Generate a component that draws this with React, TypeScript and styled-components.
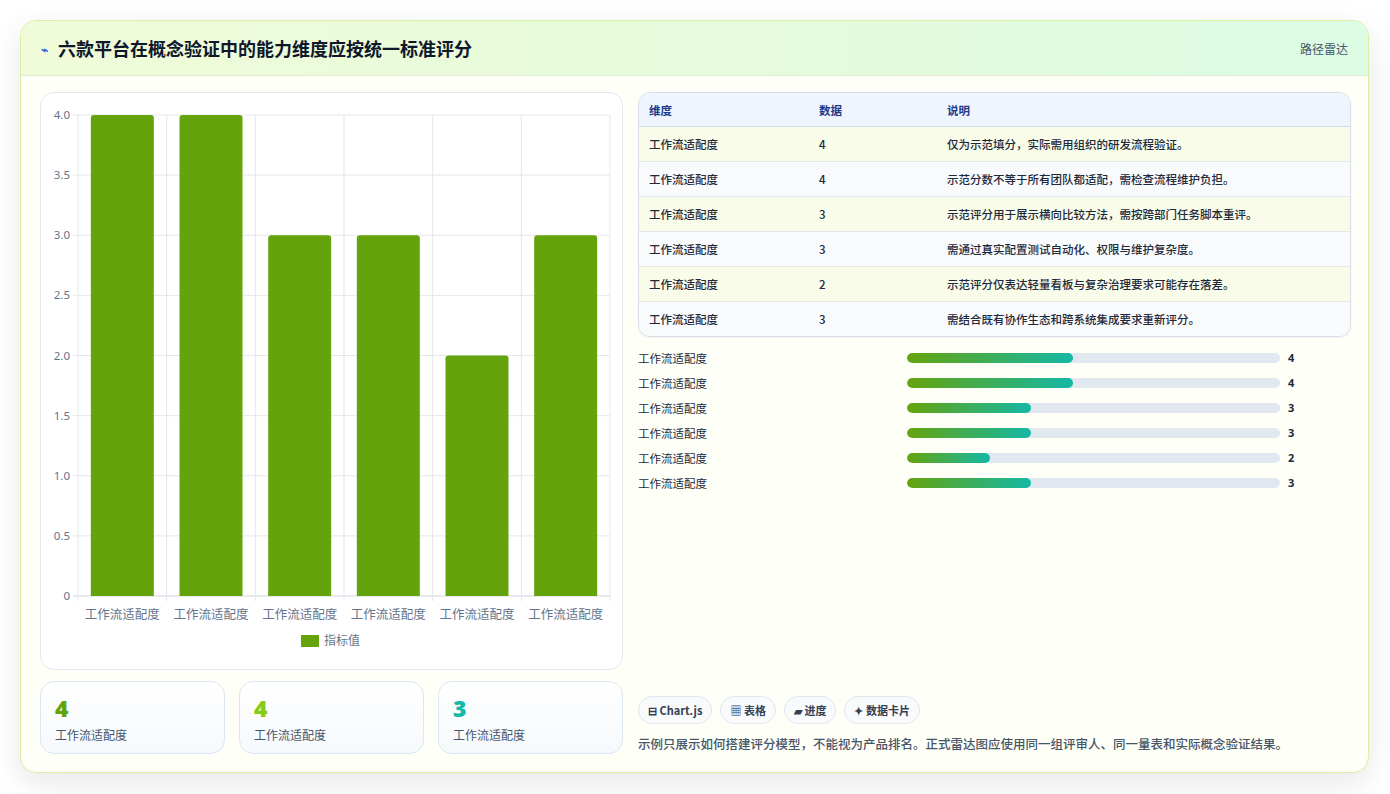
import React from "react";
import styled, { createGlobalStyle } from "styled-components";

const Global = createGlobalStyle`
  html, body { margin: 0; padding: 0; background: #ffffff; }
  body { font-family: "Noto Sans CJK SC", "Noto Sans", sans-serif; color: #1e293b; }
`;

const Page = styled.div`
  padding: 20px 21px 21px 20px;
  box-sizing: border-box;
  width: 1390px;
  height: 794px;
`;

const Card = styled.div`
  height: 753px;
  box-sizing: border-box;
  border: 1px solid #d9f0a3;
  border-radius: 16px;
  background: #fefff7;
  box-shadow: 0 10px 30px rgba(15, 23, 42, 0.1);
  overflow: hidden;
  display: flex;
  flex-direction: column;
`;

const Header = styled.div`
  height: 55px;
  flex: none;
  box-sizing: border-box;
  padding: 0 20px 0 20px;
  display: flex;
  align-items: center;
  justify-content: space-between;
  background: linear-gradient(90deg, #f0fbd9 0%, #e4fbdc 60%, #dcfce4 100%);
  border-bottom: 1px solid #e2ead4;
`;

const Title = styled.h1`
  margin: 0;
  font-size: 18px;
  font-weight: 700;
  color: #0f172a;
  display: flex;
  align-items: center;
  gap: 10px;
`;

const Bolt = styled.span`
  color: #2563eb;
  font-size: 12px;
`;

const HeaderTag = styled.span`
  font-size: 12px;
  color: #475569;
`;

const Body = styled.div`
  flex: 1;
  display: grid;
  grid-template-columns: 583px 713px;
  gap: 15px;
  padding: 16px 18px 18px 19px;
  min-height: 0;
`;

const LeftCol = styled.div`
  display: flex;
  flex-direction: column;
  gap: 11px;
`;

const ChartCard = styled.div`
  height: 578px;
  box-sizing: border-box;
  border: 1px solid #e2e8f0;
  border-radius: 14px;
  background: #ffffff;
`;

const KpiRow = styled.div`
  display: grid;
  grid-template-columns: repeat(3, 1fr);
  gap: 14px;
`;

const Kpi = styled.div`
  height: 73px;
  box-sizing: border-box;
  border: 1px solid #dbe7f3;
  border-radius: 14px;
  background: linear-gradient(180deg, #ffffff, #f6f9fd);
  padding: 12px 14px;
`;

const KpiValue = styled.div<{ $c: string }>`
  font-family: "Open Sans", "Noto Sans", sans-serif;
  font-size: 23px;
  font-weight: 800;
  line-height: 28px;
  color: ${(p) => p.$c};
`;

const KpiLabel = styled.div`
  font-size: 12px;
  color: #475569;
  margin-top: 4px;
`;

const RightCol = styled.div`
  display: flex;
  flex-direction: column;
`;

const TableWrap = styled.div`
  border: 1px solid #d7dee8;
  border-radius: 12px;
  overflow: hidden;
  box-shadow: 0 1px 2px rgba(15, 23, 42, 0.06);
`;

const Table = styled.table`
  width: 100%;
  border-collapse: collapse;
  font-size: 11.5px;
`;

const Th = styled.th`
  text-align: left;
  font-weight: 700;
  color: #1e3a8a;
  background: #eef5fe;
  height: 33px;
  padding: 0 10px;
  border-bottom: 1px solid #cfdbe8;
`;

const Tr = styled.tr<{ $alt: boolean }>`
  background: ${(p) => (p.$alt ? "#f8fafc" : "#f8fce9")};
`;

const Td = styled.td`
  height: 34px;
  padding: 0 10px;
  color: #1e293b;
  font-weight: 500;
  border-top: 1px solid #e2e8f0;
`;

const BarList = styled.div`
  margin-top: 8px;
  display: flex;
  flex-direction: column;
`;

const BarRow = styled.div`
  height: 25px;
  display: grid;
  grid-template-columns: 269px 373px 1fr;
  align-items: center;
  font-size: 11.5px;
`;

const Track = styled.div`
  height: 10px;
  border-radius: 5px;
  background: #e2e8f0;
  overflow: hidden;
`;

const Fill = styled.div`
  height: 100%;
  border-radius: 5px;
  background: linear-gradient(90deg, #65a30d, #14b8a6);
`;

const BarValue = styled.span`
  padding-left: 8px;
  font-weight: 700;
  font-family: "Open Sans", sans-serif;
  font-size: 11px;
`;

const Spacer = styled.div`
  flex: 1;
`;

const Chips = styled.div`
  display: flex;
  gap: 8px;
`;

const Chip = styled.span`
  height: 28px;
  box-sizing: border-box;
  padding: 0 9px;
  border: 1px solid #e2e8f0;
  border-radius: 14px;
  background: #f8fafc;
  display: inline-flex;
  align-items: center;
  gap: 3px;
  font-size: 11px;
  font-weight: 700;
  color: #334155;
`;

const Note = styled.p`
  margin: 10px 0 1px;
  font-size: 12.5px;
  color: #475569;
  font-weight: 500;
`;

const rows = [
  { v: 4, d: "仅为示范填分，实际需用组织的研发流程验证。" },
  { v: 4, d: "示范分数不等于所有团队都适配，需检查流程维护负担。" },
  { v: 3, d: "示范评分用于展示横向比较方法，需按跨部门任务脚本重评。" },
  { v: 3, d: "需通过真实配置测试自动化、权限与维护复杂度。" },
  { v: 2, d: "示范评分仅表达轻量看板与复杂治理要求可能存在落差。" },
  { v: 3, d: "需结合既有协作生态和跨系统集成要求重新评分。" },
];
const label = "工作流适配度";

function Chart() {
  const x0 = 37, x1 = 569, yTop = 22, yBot = 503;
  const col = (x1 - x0) / 6;
  const unit = (yBot - yTop) / 4;
  const ticks = [0, 0.5, 1, 1.5, 2, 2.5, 3, 3.5, 4];
  return (
    <svg width="580" height="576" style={{ display: "block" }}>
      {ticks.map((t) => {
        const y = yBot - t * unit;
        return (
          <g key={t}>
            <line x1={x0 - 5} x2={x1} y1={y} y2={y} stroke={t === 0 ? "#cbd5e1" : "#e5e7eb"} />
            <text x={x0 - 8} y={y + 4} textAnchor="end" fontSize="11.5" fill="#64748b" fontFamily="Noto Sans, sans-serif">
              {t === 0 ? "0" : t.toFixed(1)}
            </text>
          </g>
        );
      })}
      {Array.from({ length: 7 }).map((_, i) => (
        <line key={i} x1={x0 + i * col} x2={x0 + i * col} y1={yTop} y2={yBot + 5} stroke="#e5e7eb" />
      ))}
      {rows.map((r, i) => {
        const cx = x0 + col * i + col / 2;
        const h = r.v * unit;
        return (
          <g key={i}>
            <path
              d={`M${cx - 31.5},${yBot} V${yBot - h + 3} Q${cx - 31.5},${yBot - h} ${cx - 28.5},${yBot - h} H${cx + 28.5} Q${cx + 31.5},${yBot - h} ${cx + 31.5},${yBot - h + 3} V${yBot} Z`}
              fill="#65a30d"
            />
            <text x={cx} y={yBot + 23} textAnchor="middle" fontSize="12.5" fill="#64748b" fontFamily="Noto Sans CJK SC, sans-serif">
              {label}
            </text>
          </g>
        );
      })}
      <rect x="260" y="542" width="18" height="12" fill="#65a30d" />
      <text x="283" y="552" fontSize="12" fill="#64748b" fontFamily="Noto Sans CJK SC, sans-serif">指标值</text>
    </svg>
  );
}

export default function App() {
  return (
    <>
      <Global />
      <Page>
        <Card>
          <Header>
            <Title>
              <Bolt>⌁</Bolt>六款平台在概念验证中的能力维度应按统一标准评分
            </Title>
            <HeaderTag>路径雷达</HeaderTag>
          </Header>
          <Body>
            <LeftCol>
              <ChartCard>
                <Chart />
              </ChartCard>
              <KpiRow>
                <Kpi>
                  <KpiValue $c="#65a30d">4</KpiValue>
                  <KpiLabel>{label}</KpiLabel>
                </Kpi>
                <Kpi>
                  <KpiValue $c="#84cc16">4</KpiValue>
                  <KpiLabel>{label}</KpiLabel>
                </Kpi>
                <Kpi>
                  <KpiValue $c="#14b8a6">3</KpiValue>
                  <KpiLabel>{label}</KpiLabel>
                </Kpi>
              </KpiRow>
            </LeftCol>
            <RightCol>
              <TableWrap>
                <Table>
                  <colgroup>
                    <col style={{ width: 170 }} />
                    <col style={{ width: 128 }} />
                    <col />
                  </colgroup>
                  <thead>
                    <tr>
                      <Th>维度</Th>
                      <Th>数据</Th>
                      <Th>说明</Th>
                    </tr>
                  </thead>
                  <tbody>
                    {rows.map((r, i) => (
                      <Tr key={i} $alt={i % 2 === 1}>
                        <Td>{label}</Td>
                        <Td>{r.v}</Td>
                        <Td>{r.d}</Td>
                      </Tr>
                    ))}
                  </tbody>
                </Table>
              </TableWrap>
              <BarList>
                {rows.map((r, i) => (
                  <BarRow key={i}>
                    <span>{label}</span>
                    <Track>
                      <Fill style={{ width: `${(r.v / 9) * 100}%` }} />
                    </Track>
                    <BarValue>{r.v}</BarValue>
                  </BarRow>
                ))}
              </BarList>
              <Spacer />
              <Chips>
                <Chip>⊟ Chart.js</Chip>
                <Chip>▦ 表格</Chip>
                <Chip>▰ 进度</Chip>
                <Chip>✦ 数据卡片</Chip>
              </Chips>
              <Note>示例只展示如何搭建评分模型，不能视为产品排名。正式雷达图应使用同一组评审人、同一量表和实际概念验证结果。</Note>
            </RightCol>
          </Body>
        </Card>
      </Page>
    </>
  );
}
